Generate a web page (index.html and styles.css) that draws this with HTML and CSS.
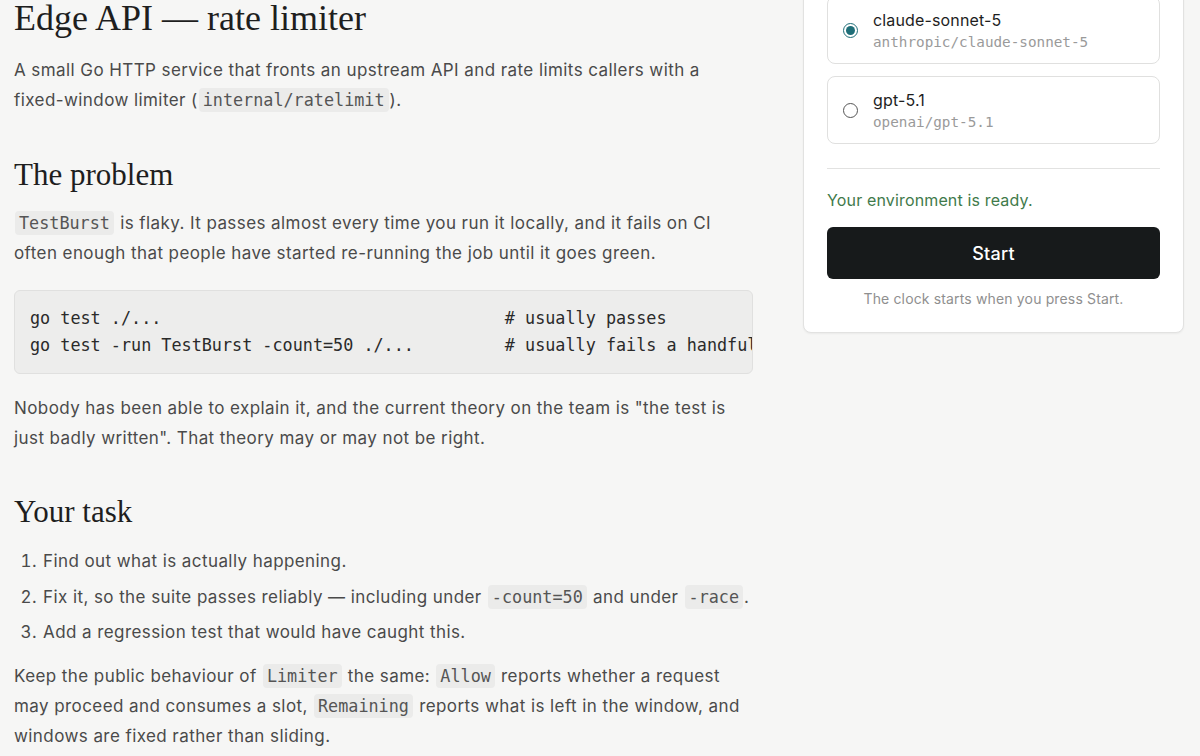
FILE: index.html
```html
<!DOCTYPE html>
<html lang="en">
<head>
<meta charset="utf-8">
<title>Edge API — rate limiter</title>
<link rel="stylesheet" href="styles.css">
</head>
<body>
<div class="page">
  <main class="content">
    <h1>Edge API — rate limiter</h1>
    <p>A small Go HTTP service that fronts an upstream API and rate limits callers with a fixed-window limiter (<code>internal/ratelimit</code>).</p>

    <h2>The problem</h2>
    <p><code>TestBurst</code> is flaky. It passes almost every time you run it locally, and it fails on CI often enough that people have started re-running the job until it goes green.</p>
<pre class="codeblock">go test ./...                                  # usually passes
go test -run TestBurst -count=50 ./...         # usually fails a handful of times</pre>
    <p>Nobody has been able to explain it, and the current theory on the team is "the test is just badly written". That theory may or may not be right.</p>

    <h2 class="task-title">Your task</h2>
    <ol class="tasks">
      <li>Find out what is actually happening.</li>
      <li>Fix it, so the suite passes reliably — including under <code>-count=50</code> and under <code>-race</code>.</li>
      <li>Add a regression test that would have caught this.</li>
    </ol>
    <p>Keep the public behaviour of <code>Limiter</code> the same: <code>Allow</code> reports whether a request may proceed and consumes a slot, <code>Remaining</code> reports what is left in the window, and windows are fixed rather than sliding.</p>
  </main>

  <aside class="side">
    <div class="card">
      <div class="options">
        <label class="option selected">
          <span class="radio on"></span>
          <span class="opt-text">
            <span class="opt-name">claude-sonnet-5</span>
            <span class="opt-id">anthropic/claude-sonnet-5</span>
          </span>
        </label>
        <label class="option">
          <span class="radio"></span>
          <span class="opt-text">
            <span class="opt-name">gpt-5.1</span>
            <span class="opt-id">openai/gpt-5.1</span>
          </span>
        </label>
      </div>
      <hr class="divider">
      <p class="ready">Your environment is ready.</p>
      <button class="start">Start</button>
      <p class="hint">The clock starts when you press Start.</p>
    </div>
  </aside>
</div>
</body>
</html>
```

FILE: styles.css
```css
html, body {
  margin: 0;
  padding: 0;
  background: #f6f6f5;
}
body {
  font-family: Inter, "Noto Sans", "Liberation Sans", sans-serif;
  color: #4a4a4a;
  font-size: 17px;
  overflow: hidden;
}
.page {
  display: grid;
  grid-template-columns: 739px 381px;
  column-gap: 50px;
  padding: 0 16px 0 14px;
  align-items: start;
}
.content {
  letter-spacing: 0.42px;
}
.content h1 {
  font-family: "Liberation Serif", "DejaVu Serif", serif;
  font-weight: 400;
  font-size: 36px;
  line-height: 36px;
  letter-spacing: 0;
  color: #1e1e1e;
  margin: 0 0 19px;
}
.content h2 {
  font-family: "Liberation Serif", "DejaVu Serif", serif;
  font-weight: 400;
  font-size: 31px;
  line-height: 36px;
  letter-spacing: 0;
  color: #1e1e1e;
  margin: 42px 0 15px;
}
.content h2.task-title {
  margin-top: 41px;
}
.content p {
  margin: 0 0 20px;
  line-height: 30px;
}
code, .codeblock, .opt-id {
  font-family: "DejaVu Sans Mono", "Liberation Mono", monospace;
  letter-spacing: 0;
}
.content code {
  font-size: 16.8px;
  background: #ebebea;
  color: #555;
  border-radius: 4px;
  padding: 2px 4px;
  margin: 0 1px;
  white-space: nowrap;
}
.codeblock {
  margin: 22px 0 19px;
  background: #ededec;
  border: 1px solid #e0e0df;
  border-radius: 6px;
  padding: 14px 15px;
  font-size: 16.8px;
  line-height: 27px;
  color: #2a2a2a;
  overflow: hidden;
  white-space: pre;
}
.tasks {
  margin: 16px 0 14px;
  padding-left: 28px;
}
.tasks li {
  line-height: 30px;
  margin-bottom: 5.5px;
  padding-left: 1px;
}
.tasks li:last-child {
  margin-bottom: 0;
}
.side {
  margin-top: -28px;
}
.card {
  background: #fff;
  border: 1px solid #e2e2e1;
  border-radius: 8px;
  box-shadow: 0 1px 2px rgba(0,0,0,0.05);
  padding: 23px;
  letter-spacing: 0.15px;
}
.options {
  display: flex;
  flex-direction: column;
  gap: 12px;
}
.option {
  display: flex;
  align-items: center;
  gap: 15px;
  height: 66px;
  padding: 0 15px;
  border: 1px solid #e0e0df;
  border-radius: 8px;
  background: #fff;
}
.radio {
  width: 13px;
  height: 13px;
  border-radius: 50%;
  border: 1.5px solid #555;
  flex: none;
  box-sizing: content-box;
  position: relative;
}
.radio.on {
  border-color: #1f6e78;
}
.radio.on::after {
  content: "";
  position: absolute;
  left: 2px;
  top: 2px;
  width: 9px;
  height: 9px;
  border-radius: 50%;
  background: #1f6e78;
}
.opt-text {
  display: flex;
  flex-direction: column;
  margin-top: 1px;
}
.opt-name {
  font-size: 16px;
  line-height: 22px;
  color: #1e1e1e;
}
.opt-id {
  font-size: 14.3px;
  line-height: 22px;
  color: #9a9a9a;
}
.divider {
  border: 0;
  border-top: 1px solid #e2e2e1;
  margin: 24px 0 19px;
}
.ready {
  margin: 0 0 15px;
  font-size: 16px;
  line-height: 24px;
  color: #3f7a4b;
}
.start {
  display: block;
  width: 100%;
  height: 52px;
  border: 0;
  border-radius: 6px;
  background: #171a1b;
  color: #fff;
  font-family: Inter, "Noto Sans", sans-serif;
  font-size: 18px;
  font-weight: 500;
  letter-spacing: 0.2px;
}
.hint {
  margin: 10px 0 0;
  text-align: center;
  font-size: 14px;
  line-height: 20px;
  color: #8f8f8f;
}
```
